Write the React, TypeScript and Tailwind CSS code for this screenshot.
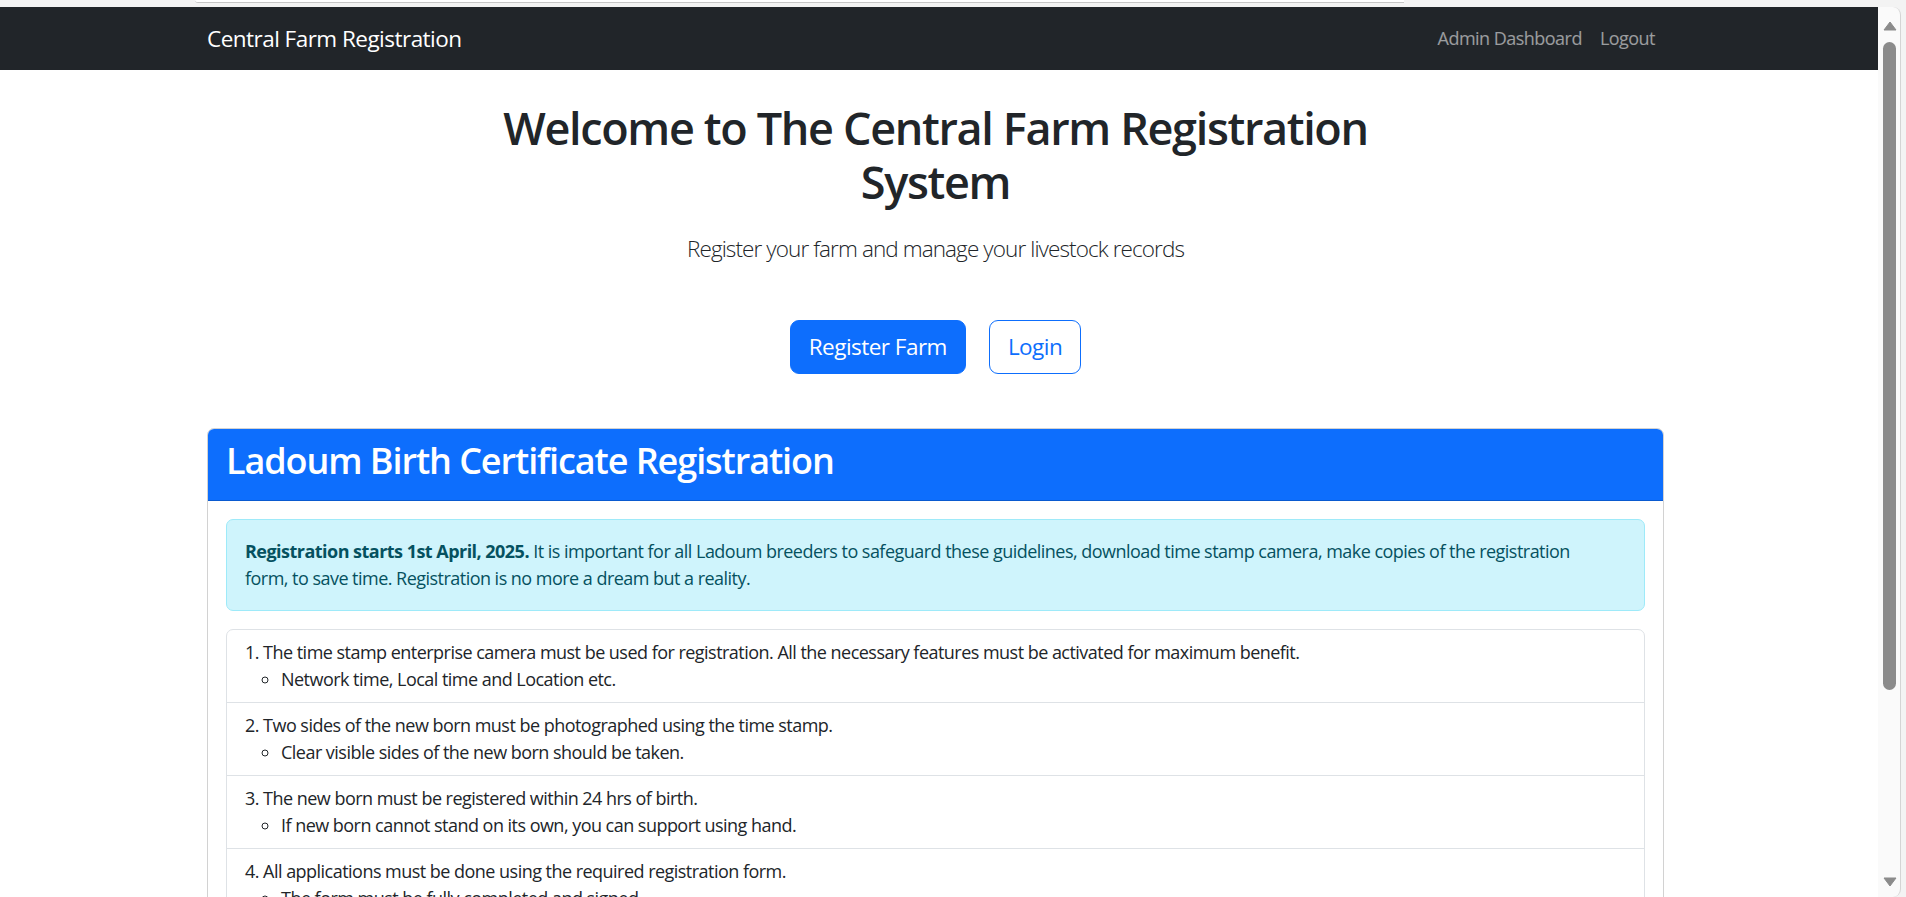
import React from 'react';

const rules = [
    {
        title: '1. The time stamp enterprise camera must be used for registration. All the necessary features must be activated for maximum benefit.',
        note: 'Network time, Local time and Location etc.',
    },
    {
        title: '2. Two sides of the new born must be photographed using the time stamp.',
        note: 'Clear visible sides of the new born should be taken.',
    },
    {
        title: '3. The new born must be registered within 24 hrs of birth.',
        note: 'If new born cannot stand on its own, you can support using hand.',
    },
    {
        title: '4. All applications must be done using the required registration form.',
        note: 'The form must be fully completed and signed.',
    },
    {
        title: '5. Registration fees must be paid before the certificate is issued.',
        note: 'Keep your payment receipt for reference.',
    },
];

const ScrollBar: React.FC = () => (
    <div className="w-[28px] flex bg-[#f3f3f3]">
        <div className="w-[23px] bg-[#fafafa] border-r border-[#d4d4d4] rounded-tr-[8px] rounded-br-[8px] flex flex-col items-center pt-[14px] pb-[10px]">
            <svg width="14" height="10" viewBox="0 0 14 10" className="ml-[1px]">
                <path d="M7 1 L13 9 L1 9 Z" fill="#8b8b8b" stroke="#8b8b8b" strokeLinejoin="round" />
            </svg>
            <div className="mt-[11px] w-[13px] h-[648px] rounded-full bg-[#8b8b8b] ml-[1px]" />
            <div className="flex-1" />
            <svg width="14" height="10" viewBox="0 0 14 10" className="ml-[1px]">
                <path d="M1 1 L13 1 L7 9 Z" fill="#8b8b8b" stroke="#8b8b8b" strokeLinejoin="round" />
            </svg>
        </div>
    </div>
);

const App: React.FC = () => {
    return (
        <div className="h-[897px] w-full flex flex-col bg-[#f3f3f3] overflow-hidden font-['Open_Sans',sans-serif] text-[#212529] tracking-[-0.033em]">
            <div className="h-[7px] shrink-0">
                <div className="ml-[195px] w-[1209px] h-[3px] bg-white border-b border-[#c6c6c6] rounded-bl-[3px]" />
            </div>

            <div className="flex flex-1 min-h-0">
                <div className="flex-1 bg-white overflow-hidden">
                    {/* navbar */}
                    <nav className="h-[63px] bg-[#212529]">
                        <div className="pr-[7px] h-full">
                            <div className="w-[1457px] mx-auto h-full flex items-center justify-between">
                                <span className="text-[22.5px] leading-[34px] text-white">Central Farm Registration</span>
                                <div className="flex items-center">
                                    <a className="px-[9px] text-[18px] text-white/55">Admin Dashboard</a>
                                    <a className="px-[9px] text-[18px] text-white/55">Logout</a>
                                </div>
                            </div>
                        </div>
                    </nav>

                    <div className="pr-[7px]">
                        <div className="w-[1457px] mx-auto">
                            <div className="text-center">
                                <h1 className="mt-[31px] text-[45px] leading-[54px] font-semibold tracking-[-0.03em]">
                                    Welcome to The Central Farm Registration
                                    <br />
                                    System
                                </h1>
                                <p className="mt-[23px] text-[22.5px] leading-[34px] font-light tracking-[-0.04em]">
                                    Register your farm and manage your livestock records
                                </p>
                                <div className="mt-[54px] flex justify-center gap-[23px]">
                                    <button className="px-[18px] py-[9px] text-[22.5px] leading-[34px] bg-[#0d6efd] border border-[#0d6efd] text-white rounded-[9px]">
                                        Register Farm
                                    </button>
                                    <button className="px-[18px] py-[9px] text-[22.5px] leading-[34px] bg-white border border-[#0d6efd] text-[#0d6efd] rounded-[9px]">
                                        Login
                                    </button>
                                </div>
                            </div>

                            <div className="mt-[54px] border border-black/[0.175] rounded-[7px] overflow-hidden">
                                <div className="bg-[#0d6efd] px-[18px] pt-[10px] pb-[18px] border-b border-black/[0.175]">
                                    <h2 className="text-[36px] leading-[43px] font-semibold text-white tracking-[-0.03em]">
                                        Ladoum Birth Certificate Registration
                                    </h2>
                                </div>
                                <div className="p-[18px]">
                                    <div className="bg-[#cff4fc] border border-[#9eeaf9] text-[#055160] rounded-[7px] p-[18px] text-[18px] leading-[27px]">
                                        <strong className="font-bold">Registration starts 1st April, 2025.</strong> It is
                                        important for all Ladoum breeders to safeguard these guidelines, download time
                                        stamp camera, make copies of the registration
                                        <br />
                                        form, to save time. Registration is no more a dream but a reality.
                                    </div>
                                    <div className="mt-[18px] border border-[#dee2e6] rounded-[7px]">
                                        {rules.map((rule, i) => (
                                            <div
                                                key={i}
                                                className="px-[18px] py-[9px] text-[18px] leading-[27px] border-b border-[#dee2e6] last:border-b-0"
                                            >
                                                <div>{rule.title}</div>
                                                <ul className="list-[circle] pl-[36px]">
                                                    <li>{rule.note}</li>
                                                </ul>
                                            </div>
                                        ))}
                                    </div>
                                </div>
                            </div>
                        </div>
                    </div>
                </div>
                <ScrollBar />
            </div>
        </div>
    );
};

export default App;
